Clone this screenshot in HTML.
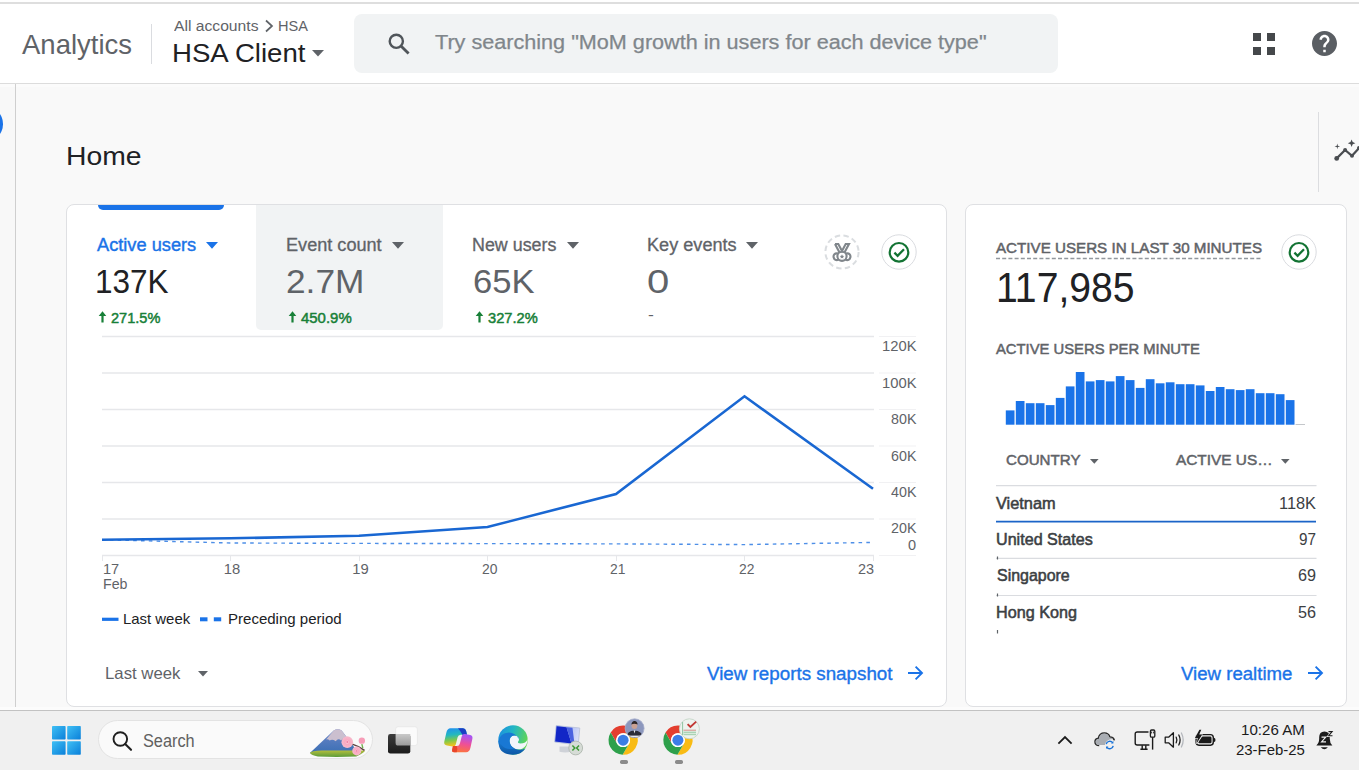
<!DOCTYPE html>
<html><head><meta charset="utf-8"><title>Analytics</title>
<style>
html,body{margin:0;padding:0;}
body{width:1359px;height:770px;overflow:hidden;position:relative;background:#f9f9f9;font-family:"Liberation Sans",sans-serif;}
.a{position:absolute;}
.t{position:absolute;white-space:pre;transform-origin:0 50%;font-family:"Liberation Sans",sans-serif;}
svg{position:absolute;overflow:visible;}

</style></head>
<body>
<!-- top browser edge -->
<div class="a" style="left:0;top:0;width:1359px;height:84px;background:#fff"></div>
<div class="a" style="left:0;top:2px;width:1359px;height:2px;background:#dedede"></div>
<div class="a" style="left:0;top:83px;width:1359px;height:1px;background:#dcdcdc"></div>
<!-- left rail -->
<div class="a" style="left:0;top:84px;width:15px;height:627px;background:#f8f8f8"></div>
<div class="a" style="left:0;top:84px;width:1359px;height:3px;background:#fbfbfb"></div>
<div class="a" style="left:15px;top:84px;width:1px;height:627px;background:#cfcfcf"></div>
<div class="a" style="left:-33px;top:106px;width:36.4px;height:36px;border-radius:50%;background:#1a73e8"></div>
<!-- header divider -->
<div class="a" style="left:151px;top:24px;width:1px;height:40px;background:#dadce0"></div>
<!-- breadcrumb chevron + dropdown -->
<svg style="left:264px;top:19px" width="10" height="14" viewBox="0 0 10 14"><path d="M2 1.5 L8 7 L2 12.5" fill="none" stroke="#5f6368" stroke-width="1.7"/></svg>
<svg style="left:312px;top:50px" width="12" height="7" viewBox="0 0 12 7"><path d="M0 0H12L6 6.5Z" fill="#5f6368"/></svg>
<!-- search box -->
<div class="a" style="left:354px;top:14px;width:704px;height:59px;border-radius:8px;background:#f1f3f4"></div>
<svg style="left:386px;top:31px" width="26" height="26" viewBox="0 0 26 26"><circle cx="10.3" cy="10.3" r="6.6" fill="none" stroke="#50555a" stroke-width="2.4"/><path d="M15.2 15.2 L22.6 22.6" stroke="#50555a" stroke-width="2.8" stroke-linecap="butt"/></svg>
<!-- apps grid -->
<svg style="left:1253px;top:33px" width="22" height="22" viewBox="0 0 22 22"><g fill="#45484b"><rect x="0" y="0" width="8" height="8"/><rect x="14" y="0" width="8" height="8"/><rect x="0" y="14" width="8" height="8"/><rect x="14" y="14" width="8" height="8"/></g></svg>
<!-- help -->
<svg style="left:1312px;top:31px" width="25" height="25" viewBox="0 0 24 24"><path fill="#5a5e63" d="M12 0C5.37 0 0 5.37 0 12s5.37 12 12 12 12-5.37 12-12S18.63 0 12 0zm1.2 20.4h-2.4V18h2.4v2.4zm2.48-9.3l-1.08 1.1c-.86.88-1.4 1.6-1.4 3.4h-2.4V15c0-1.32.54-2.52 1.4-3.4l1.49-1.5c.44-.43.71-1.03.71-1.7 0-1.32-1.08-2.4-2.4-2.4S9.6 7.08 9.6 8.4H7.2c0-2.65 2.15-4.8 4.8-4.8s4.8 2.15 4.8 4.8c0 1.06-.43 2.02-1.12 2.7z"/></svg>
<!-- right panel line + insights icon -->
<div class="a" style="left:1318px;top:112px;width:1px;height:80px;background:#dcdde0"></div>
<svg style="left:0;top:0" width="1359" height="770" viewBox="0 0 1359 770"><g fill="#4a4d51"><path d="M1336.7 158.4 L1345.1 150 L1352 155.8 L1360 147" fill="none" stroke="#4a4d51" stroke-width="2.2" stroke-linejoin="round"/><circle cx="1336.7" cy="158.4" r="2.4"/><circle cx="1345.1" cy="150" r="2"/><circle cx="1352" cy="155.8" r="2"/><circle cx="1359" cy="148" r="2"/><path d="M1351.6 139.4 l1.1 2.7 2.7 1.1 -2.7 1.1 -1.1 2.7 -1.1 -2.7 -2.7 -1.1 2.7 -1.1z"/><path d="M1337.3 143.6 l.55 2.25 2.25 .55 -2.25 .55 -.55 2.25 -.55 -2.25 -2.25 -.55 2.25 -.55z"/></g></svg>

<!-- CARD 1 -->
<div class="a" style="left:965px;top:204px;width:382px;height:503px;box-sizing:border-box;border:1px solid #dfe0e3;border-radius:8px;background:#fff"></div>
<div class="a" style="left:66px;top:204px;width:881px;height:503px;box-sizing:border-box;border:1px solid #dfe0e3;border-radius:8px;background:#fff"></div>
<div class="a" style="left:98px;top:205px;width:126px;height:5px;border-radius:0 0 5px 5px;background:#1a73e8"></div>
<div class="a" style="left:256px;top:205px;width:187px;height:124.5px;border-radius:0 0 5px 5px;background:#f1f3f4"></div>
<!-- metric dropdown triangles -->
<svg style="left:205.5px;top:242px" width="12" height="7" viewBox="0 0 12 7"><path d="M0 0H12L6 6.8Z" fill="#1a73e8"/></svg>
<svg style="left:391.5px;top:242px" width="12" height="7" viewBox="0 0 12 7"><path d="M0 0H12L6 6.8Z" fill="#5f6368"/></svg>
<svg style="left:566.5px;top:242px" width="12" height="7" viewBox="0 0 12 7"><path d="M0 0H12L6 6.8Z" fill="#5f6368"/></svg>
<svg style="left:745.5px;top:242px" width="12" height="7" viewBox="0 0 12 7"><path d="M0 0H12L6 6.8Z" fill="#5f6368"/></svg>
<!-- green up arrows -->
<svg style="left:97.6px;top:310.8px" width="9" height="12" viewBox="0 0 9 12"><path d="M4.5 0.3 L8.3 4.9 H5.6 V11.6 H3.4 V4.9 H0.7Z" fill="#188038"/></svg>
<svg style="left:287.6px;top:310.8px" width="9" height="12" viewBox="0 0 9 12"><path d="M4.5 0.3 L8.3 4.9 H5.6 V11.6 H3.4 V4.9 H0.7Z" fill="#188038"/></svg>
<svg style="left:474.6px;top:310.8px" width="9" height="12" viewBox="0 0 9 12"><path d="M4.5 0.3 L8.3 4.9 H5.6 V11.6 H3.4 V4.9 H0.7Z" fill="#188038"/></svg>
<!-- medal + check icons card1 -->
<svg style="left:824px;top:234px" width="36" height="36" viewBox="0 0 36 36"><circle cx="18" cy="18" r="16.6" fill="#fff" stroke="#dadde0" stroke-width="2" stroke-dasharray="5.4 3.4"/>
<g fill="none" stroke="#80868b" stroke-width="2.1"><path d="M11 10 H14.3 L18 17 L21.7 10 H25 L20.6 18.3"/><path d="M11 10 L15.4 18.3"/><circle cx="18" cy="22.3" r="4.6"/><path d="M14.2 19.6 C10.6 18.7 9.2 21 9.6 23.3 C10 25.6 12.3 27 14.6 25.6"/><path d="M21.8 19.6 C25.4 18.7 26.8 21 26.4 23.3 C26 25.6 23.7 27 21.4 25.6"/></g>
<path d="M18 20.2 l.7 1.5 1.6 .2 -1.2 1.1 .3 1.6 -1.4 -.8 -1.4 .8 .3 -1.6 -1.2 -1.1 1.6 -.2z" fill="#80868b"/></svg>
<svg style="left:880.5px;top:234px" width="36" height="36" viewBox="0 0 36 36"><circle cx="18" cy="18" r="17.2" fill="#fff" stroke="#dadce0" stroke-width="1"/><circle cx="18" cy="18.3" r="9.3" fill="none" stroke="#137333" stroke-width="2.2"/><path d="M13.4 18.6 L16.6 21.8 L23 15.2" fill="none" stroke="#137333" stroke-width="2.3"/></svg>

<!-- CHART -->
<svg style="left:0;top:0" width="1359" height="770" viewBox="0 0 1359 770">
<g stroke="#e6e7ea" stroke-width="1.3"><line x1="102" y1="336.5" x2="874" y2="336.5"/><line x1="102" y1="373" x2="874" y2="373"/><line x1="102" y1="409.5" x2="874" y2="409.5"/><line x1="102" y1="446" x2="874" y2="446"/><line x1="102" y1="482.5" x2="874" y2="482.5"/><line x1="102" y1="519" x2="874" y2="519"/><line x1="102" y1="555.5" x2="874" y2="555.5"/></g><g stroke="#f1f1f3" stroke-width="1.2"><line x1="879" y1="336.5" x2="916" y2="336.5"/><line x1="879" y1="373" x2="916" y2="373"/><line x1="879" y1="409.5" x2="916" y2="409.5"/><line x1="879" y1="446" x2="916" y2="446"/><line x1="879" y1="482.5" x2="916" y2="482.5"/><line x1="879" y1="519" x2="916" y2="519"/><line x1="879" y1="555.5" x2="916" y2="555.5"/></g>
<g stroke="#e6e7ea" stroke-width="1">
<line x1="102.5" y1="555" x2="102.5" y2="561"/><line x1="230.5" y1="555" x2="230.5" y2="561"/><line x1="359.5" y1="555" x2="359.5" y2="561"/><line x1="487.5" y1="555" x2="487.5" y2="561"/><line x1="616.5" y1="555" x2="616.5" y2="561"/><line x1="744.5" y1="555" x2="744.5" y2="561"/><line x1="873.5" y1="555" x2="873.5" y2="561"/>
</g>
<polyline points="102,539.7 230.5,543 359,543.4 487.5,543.6 616,543.9 744.5,544.6 873,542.4" fill="none" stroke="#2f7be3" stroke-width="1.4" stroke-dasharray="3.6 4.2" opacity="0.85"/>
<polyline points="102,539.7 230.5,538.3 359,535.8 487.5,527 616,494 744.5,396.3 873,488.8" fill="none" stroke="#1967d2" stroke-width="2.6" stroke-linejoin="miter"/>
<!-- legend -->
<line x1="102" y1="619.3" x2="118.5" y2="619.3" stroke="#1a73e8" stroke-width="3.2"/>
<line x1="200" y1="619.3" x2="207.5" y2="619.3" stroke="#1a73e8" stroke-width="4"/>
<line x1="213.8" y1="619.3" x2="221.2" y2="619.3" stroke="#1a73e8" stroke-width="4"/>
</svg>
<svg style="left:197.5px;top:671px" width="10" height="6" viewBox="0 0 10 6"><path d="M0 0H10L5 5.5Z" fill="#5f6368"/></svg>
<!-- arrows -->
<svg style="left:907px;top:665px" width="17" height="16" viewBox="0 0 17 16"><path d="M1 8 H15 M8.6 1.6 L15 8 L8.6 14.4" fill="none" stroke="#1a73e8" stroke-width="1.9"/></svg>
<svg style="left:1307px;top:665px" width="17" height="16" viewBox="0 0 17 16"><path d="M1 8 H15 M8.6 1.6 L15 8 L8.6 14.4" fill="none" stroke="#1a73e8" stroke-width="1.9"/></svg>
<!-- CARD 2 -->
<svg style="left:996px;top:257px" width="266" height="3" viewBox="0 0 266 3"><line x1="0" y1="1.5" x2="266" y2="1.5" stroke="#92979d" stroke-width="1.5" stroke-dasharray="4 2.2"/></svg>
<svg style="left:1281px;top:234px" width="36" height="36" viewBox="0 0 36 36"><circle cx="18" cy="18" r="17.2" fill="#fff" stroke="#dadce0" stroke-width="1"/><circle cx="18" cy="18.3" r="9.3" fill="none" stroke="#137333" stroke-width="2.2"/><path d="M13.4 18.6 L16.6 21.8 L23 15.2" fill="none" stroke="#137333" stroke-width="2.3"/></svg>
<svg style="left:0;top:0" width="1359" height="770" viewBox="0 0 1359 770"><g fill="#1a73e8"><rect x="1005.80" y="410.4" width="8.7" height="14.3"/><rect x="1015.80" y="401.0" width="8.7" height="23.7"/><rect x="1025.80" y="403.2" width="8.7" height="21.5"/><rect x="1035.80" y="403.2" width="8.7" height="21.5"/><rect x="1045.80" y="405.1" width="8.7" height="19.6"/><rect x="1055.80" y="397.9" width="8.7" height="26.8"/><rect x="1065.80" y="386.4" width="8.7" height="38.3"/><rect x="1075.80" y="372.0" width="8.7" height="52.7"/><rect x="1085.80" y="381.4" width="8.7" height="43.3"/><rect x="1095.80" y="380.1" width="8.7" height="44.6"/><rect x="1105.80" y="381.4" width="8.7" height="43.3"/><rect x="1115.80" y="376.1" width="8.7" height="48.6"/><rect x="1125.80" y="380.1" width="8.7" height="44.6"/><rect x="1135.80" y="387.9" width="8.7" height="36.8"/><rect x="1145.80" y="379.2" width="8.7" height="45.5"/><rect x="1155.80" y="383.3" width="8.7" height="41.4"/><rect x="1165.80" y="382.3" width="8.7" height="42.4"/><rect x="1175.80" y="384.2" width="8.7" height="40.5"/><rect x="1185.80" y="384.2" width="8.7" height="40.5"/><rect x="1195.80" y="385.4" width="8.7" height="39.3"/><rect x="1205.80" y="391.0" width="8.7" height="33.7"/><rect x="1215.80" y="387.0" width="8.7" height="37.7"/><rect x="1225.80" y="389.2" width="8.7" height="35.5"/><rect x="1235.80" y="390.1" width="8.7" height="34.6"/><rect x="1245.80" y="389.2" width="8.7" height="35.5"/><rect x="1255.80" y="393.2" width="8.7" height="31.5"/><rect x="1265.80" y="393.2" width="8.7" height="31.5"/><rect x="1275.80" y="394.2" width="8.7" height="30.5"/><rect x="1285.80" y="400.1" width="8.7" height="24.6"/></g><line x1="1295.5" y1="424.5" x2="1305" y2="424.5" stroke="#c4c7cb" stroke-width="1"/><g stroke="#dadce0" stroke-width="1.2"><line x1="996" y1="485.7" x2="1316.5" y2="485.7"/><line x1="996" y1="558.4" x2="1316.5" y2="558.4"/><line x1="996" y1="595.5" x2="1316.5" y2="595.5"/></g><line x1="996" y1="521.7" x2="1316" y2="521.7" stroke="#1b64c8" stroke-width="1.8"/><g stroke="#5f6368" stroke-width="1.2"><line x1="997.5" y1="556.5" x2="997.5" y2="559.5"/><line x1="997.5" y1="593.5" x2="997.5" y2="596.5"/><line x1="997.5" y1="630" x2="997.5" y2="633.5"/></g></svg>
<svg style="left:1090px;top:458.7px" width="8.6" height="5.2" viewBox="0 0 10 6"><path d="M0 0H10L5 5.5Z" fill="#5f6368"/></svg>
<svg style="left:1281px;top:458.7px" width="8.6" height="5.2" viewBox="0 0 10 6"><path d="M0 0H10L5 5.5Z" fill="#5f6368"/></svg>
<!-- TASKBAR -->
<div class="a" style="left:0;top:707px;width:1359px;height:3px;background:#fcfcfc"></div>
<div class="a" style="left:0;top:710px;width:1359px;height:60px;background:#f0f0f0"></div>
<div class="a" style="left:0;top:710px;width:1359px;height:1px;background:#c2c2c2"></div>
<!-- windows logo -->
<svg style="left:52px;top:726px" width="29" height="29" viewBox="0 0 29 29"><defs><linearGradient id="wg" x1="0" y1="0" x2="1" y2="1"><stop offset="0" stop-color="#3fc0f5"/><stop offset="1" stop-color="#0a7fd9"/></linearGradient></defs><g fill="url(#wg)"><rect x="0" y="0" width="13.6" height="13.6" rx="0.8"/><rect x="15.2" y="0" width="13.6" height="13.6" rx="0.8"/><rect x="0" y="15.2" width="13.6" height="13.6" rx="0.8"/><rect x="15.2" y="15.2" width="13.6" height="13.6" rx="0.8"/></g></svg>
<!-- search pill -->
<div class="a" style="left:98px;top:720.2px;width:274.6px;height:39.2px;border-radius:19.6px;background:#fafafa;border:1px solid #e3e3e3;box-sizing:border-box"></div>
<svg style="left:110px;top:729px" width="24" height="24" viewBox="0 0 24 24"><circle cx="10.3" cy="10" r="6.8" fill="none" stroke="#1f1f1f" stroke-width="1.9"/><path d="M15.2 15 L21 20.8" stroke="#1f1f1f" stroke-width="2.1" stroke-linecap="round"/></svg>
<!-- mountain / blossoms -->
<svg style="left:290px;top:715px" width="90" height="50" viewBox="0 0 1359 755"><defs>
<linearGradient id="mt" x1="0" y1="0" x2="0" y2="1"><stop offset="0" stop-color="#6d86c8"/><stop offset="1" stop-color="#3b6fb4"/></linearGradient>
<linearGradient id="gr" x1="0" y1="0" x2="0" y2="1"><stop offset="0" stop-color="#b4bf3c"/><stop offset="1" stop-color="#5c9c3a"/></linearGradient>
<radialGradient id="bl"><stop offset="0" stop-color="#fff1f5"/><stop offset=".35" stop-color="#f9a8c0"/><stop offset="1" stop-color="#f7b9cc"/></radialGradient></defs>
<path d="M300 575 L660 235 Q720 195 780 235 L1010 540 L1000 575Z" fill="url(#mt)"/>
<path d="M545 370 L660 235 Q720 195 780 235 L850 330 Q800 350 770 385 Q730 340 690 395 Q640 360 600 385 Q570 360 545 370Z" fill="#cbbfcf"/>
<path d="M300 575 Q320 540 480 535 L1130 535 Q1140 560 1000 625 Q700 640 420 625 Q320 610 300 575Z" fill="url(#gr)"/>
<path d="M940 440 Q1040 470 1125 535" fill="none" stroke="#5d3f3f" stroke-width="22"/>
<path d="M1085 440 L1100 500" fill="none" stroke="#6fae4a" stroke-width="20"/>
<circle cx="865" cy="410" r="88" fill="url(#bl)"/><circle cx="865" cy="408" r="16" fill="#ef7fa3"/>
<circle cx="1085" cy="388" r="48" fill="#f79db8"/>
<circle cx="1008" cy="542" r="68" fill="url(#bl)"/><circle cx="1008" cy="542" r="13" fill="#ef7fa3"/>
</svg>
<!-- task view -->
<svg style="left:387px;top:726px" width="32" height="29" viewBox="0 0 32 29"><defs><linearGradient id="tv1" x1="0" y1="0" x2="0" y2="1"><stop offset="0" stop-color="#3c3c3c"/><stop offset="1" stop-color="#1c1c1c"/></linearGradient><linearGradient id="tv2" x1="0" y1="0" x2="0" y2="1"><stop offset="0" stop-color="#c9c9c9"/><stop offset="1" stop-color="#9b9b9b"/></linearGradient></defs>
<rect x="8.6" y="0.7" width="21.8" height="18.9" rx="2.6" fill="#fbfbfb" stroke="#e4e4e4" stroke-width=".7"/>
<rect x="1" y="8" width="22.3" height="19.6" rx="2.4" fill="url(#tv1)"/>
<path d="M8.6 8 H23.3 V19.6 H11.2 Q8.6 19.6 8.6 17Z" fill="url(#tv2)"/></svg>
<!-- copilot -->
<svg style="left:442.5px;top:725.75px" width="31.25" height="27.5" viewBox="580 110 250 220"><defs>
<linearGradient id="c1" x1="0" y1="0" x2="0.15" y2="1"><stop offset="0" stop-color="#1f8df2"/><stop offset=".4" stop-color="#22b8c0"/><stop offset=".7" stop-color="#7fc94a"/><stop offset="1" stop-color="#f6c21c"/></linearGradient>
<linearGradient id="c2" x1="0.2" y1="0" x2="0" y2="1"><stop offset="0" stop-color="#a855f2"/><stop offset=".45" stop-color="#ee4f98"/><stop offset="1" stop-color="#ff7a2e"/></linearGradient></defs>
<path d="M640 128 H740 Q760 128 765 150 L772 180 H722 Q702 180 697 200 L682 258 Q677 277 657 273 L612 266 Q585 260 590 235 L606 165 Q614 128 640 128Z" fill="url(#c1)"/>
<path d="M700 128 H740 Q760 128 765 150 L772 180 H735 Q720 150 700 128Z" fill="#1b3fc4"/>
<path d="M765 320 H668 Q650 320 653 300 L660 270 H690 Q710 270 715 250 L730 192 Q735 172 755 174 L798 182 Q820 188 815 212 L800 282 Q792 320 765 320Z" fill="url(#c2)"/>
<path d="M653 300 L660 270 H690 Q700 300 690 320 H668 Q650 320 653 300Z" fill="#e8452a"/>
</svg>
<!-- edge -->
<svg style="left:497.9px;top:724.75px" width="30" height="30" viewBox="0 0 30 30"><defs>
<linearGradient id="e2" x1="0" y1="0.2" x2="1" y2="0.5"><stop offset="0" stop-color="#1c8fe0"/><stop offset=".45" stop-color="#22b6c4"/><stop offset="1" stop-color="#62d651"/></linearGradient>
<linearGradient id="e3" x1="0" y1="0" x2="0" y2="1"><stop offset="0" stop-color="#1b84db"/><stop offset="1" stop-color="#0d56a6"/></linearGradient></defs>
<circle cx="15" cy="15" r="14.7" fill="url(#e2)"/>
<path d="M0.5 16.5 Q0.5 29.7 15 29.7 Q23 29.7 27.5 23.5 Q21.5 26 16.8 23.6 Q11 20.6 11.6 15 Q5 9 0.5 16.5Z" fill="url(#e3)"/>
<path d="M11.6 15.2 Q12 11 16 10.4 Q20.6 10.4 21 14 Q21 15.8 19.9 17 Q19.5 18.3 22.2 18.6 Q28.2 18.6 29.6 14 Q29.7 20.5 24.2 23.8 Q19 25.4 15 22.4 Q11.4 19.8 11.6 15.2Z" fill="#f2f6fb"/>
<path d="M0.5 16.5 Q1.8 7.8 11 7.4 Q17.2 7.4 21 14 Q20.6 10.4 16 10.4 Q12 11 11.6 15.2 Q11 20.6 16.8 23.6 Q8 25.6 3 19.8 Q0.8 18.4 0.5 16.5Z" fill="#1978d4"/>
</svg>
<!-- remote desktop -->
<svg style="left:0;top:0" width="1359" height="770" viewBox="0 0 1359 770"><defs><linearGradient id="rd1" x1="0" y1="0" x2="1" y2="0.3"><stop offset="0" stop-color="#7f96ee"/><stop offset="1" stop-color="#d6dcf7"/></linearGradient></defs>
<path d="M559.5 746.5 H571 V751.8 Q565 753.2 559.5 751.8Z" fill="#cfd2d8"/>
<path d="M556.2 725.6 L579.8 728 L578.2 745 L554.6 742Z" fill="url(#rd1)" stroke="#b8c0d8" stroke-width=".8"/>
<path d="M556.6 726.2 L566.5 727.2 L571.5 743.6 L555.2 741.6Z" fill="#1226c6"/>
<path d="M566.5 727.2 L572.5 727.8 L574.5 744 L571.5 743.6Z" fill="#4a62e0"/>
<circle cx="575.7" cy="748" r="6.9" fill="#d6dcd6" stroke="#aab2aa" stroke-width=".8"/>
<path d="M572.4 745.4 l2.4 2.6 -2.4 2.6 M579 745.4 l-2.4 2.6 2.4 2.6" fill="none" stroke="#3d9a35" stroke-width="1.5"/>
</svg>
<!-- chrome icons -->
<svg style="left:0;top:0" width="1359" height="770" viewBox="0 0 1359 770"><circle cx="623.1" cy="740.2" r="14.299999999999999" fill="#fff"/><path d="M623.10 733.30 L635.97 733.30 A14.6 14.6 0 0 0 610.69 732.51 L617.12 743.65 A6.9 6.9 0 0 1 623.10 733.30Z" fill="#e33e2f"/><path d="M623.10 733.30 L635.97 733.30 A14.6 14.6 0 0 1 622.64 754.79 L629.08 743.65 A6.9 6.9 0 0 0 623.10 733.30Z" fill="#f8bb14"/><path d="M617.12 743.65 L610.69 732.51 A14.6 14.6 0 0 0 622.64 754.79 L629.08 743.65 A6.9 6.9 0 0 1 617.12 743.65Z" fill="#2ea04b"/><circle cx="623.1" cy="740.2" r="6.9" fill="#fff"/><circle cx="623.1" cy="740.2" r="5.5" fill="#3c7de6"/><circle cx="677.9" cy="740.2" r="14.299999999999999" fill="#fff"/><path d="M677.90 733.30 L690.77 733.30 A14.6 14.6 0 0 0 665.49 732.51 L671.92 743.65 A6.9 6.9 0 0 1 677.90 733.30Z" fill="#e33e2f"/><path d="M677.90 733.30 L690.77 733.30 A14.6 14.6 0 0 1 677.44 754.79 L683.88 743.65 A6.9 6.9 0 0 0 677.90 733.30Z" fill="#f8bb14"/><path d="M671.92 743.65 L665.49 732.51 A14.6 14.6 0 0 0 677.44 754.79 L683.88 743.65 A6.9 6.9 0 0 1 671.92 743.65Z" fill="#2ea04b"/><circle cx="677.9" cy="740.2" r="6.9" fill="#fff"/><circle cx="677.9" cy="740.2" r="5.5" fill="#3c7de6"/><g><circle cx="634.6" cy="728.3" r="9.5" fill="#8c97bd"/><clipPath id="av"><circle cx="634.6" cy="728.3" r="9.3"/></clipPath><g clip-path="url(#av)"><path d="M626 738 Q627 730.5 634.3 730.5 Q641.8 730.5 643.5 738Z" fill="#2b2c38"/><ellipse cx="634.4" cy="725.6" rx="2.9" ry="3.5" fill="#c9a193"/><path d="M631.3 724.5 Q632 720.8 634.6 721 Q637.4 721 637.6 724.6 Q634.5 722.8 631.3 724.5Z" fill="#2d2626"/><path d="M633.6 730.3 L634.5 733.5 L635.4 730.3Z" fill="#e8e8ee"/><rect x="628" y="735.6" width="13" height="1.8" fill="#e9e9ef"/></g><circle cx="634.6" cy="728.3" r="9.5" fill="none" stroke="#a7afcc" stroke-width=".8"/></g><g><circle cx="689.4" cy="728.8" r="10" fill="#eef3ee"/><circle cx="689.4" cy="728.8" r="10" fill="none" stroke="#c5d6c8" stroke-width=".9"/><path d="M682.6 722 V735" stroke="#8fc4a0" stroke-width="1"/><rect x="683.5" y="729.6" width="12.5" height="1.3" fill="#d9a6a0"/><rect x="683.5" y="731.6" width="12.5" height="3.6" fill="#a9d3b4"/><rect x="683.5" y="733" width="12.5" height=".8" fill="#e4f1e7"/><path d="M687.6 724.2 L690.4 727 L696.2 721.6" fill="none" stroke="#c23a34" stroke-width="1.9"/></g></svg>
<div class="a" style="left:619.5px;top:760.3px;width:8px;height:3.4px;border-radius:1.7px;background:#8b8b8b"></div>
<div class="a" style="left:674.5px;top:760.3px;width:8px;height:3.4px;border-radius:1.7px;background:#8b8b8b"></div>
<!-- system tray -->
<svg style="left:1057px;top:735px" width="16" height="10" viewBox="0 0 16 10"><path d="M1.4 8.6 L8 2 L14.6 8.6" fill="none" stroke="#1b1b1b" stroke-width="1.8"/></svg>
<svg style="left:1094px;top:731px" width="22" height="20" viewBox="0 0 22 20"><path d="M5.2 14.5 Q1 14.5 1 10.8 Q1 7.6 4.4 7.2 Q5.4 2 10.4 2 Q14.6 2 15.9 6 Q19.6 6.2 20.4 9.4" fill="none" stroke="#2a2a2a" stroke-width="1.5"/><path d="M5 14 Q1.6 14 1.6 10.9 Q1.6 8 4.8 7.8 Q5.6 2.6 10.4 2.6 Q14.2 2.6 15.4 6.6 Q18 6.6 19 8 Q15 8 13 10 Q11 12 11 14Z" fill="#a9adb3"/><circle cx="15.7" cy="14" r="4.3" fill="#f0f0f0"/><path d="M12.2 13.2 A3.6 3.6 0 0 1 18.6 11.6 M19.2 14.8 A3.6 3.6 0 0 1 12.8 16.4" fill="none" stroke="#1a73d8" stroke-width="1.4"/><path d="M19.4 10 V12.4 H17 Z M12 18 V15.6 H14.4Z" fill="#1a73d8"/></svg>
<svg style="left:1134px;top:729px" width="23" height="22" viewBox="0 0 23 22"><path d="M14.5 3 H3.2 Q1.2 3 1.2 5 V14 Q1.2 16 3.2 16 H15.4" fill="none" stroke="#1b1b1b" stroke-width="1.4"/><path d="M6.4 20.3 H13.6 M8.2 16.2 V20 M11.8 16.2 V20" fill="none" stroke="#1b1b1b" stroke-width="1.4"/><rect x="16.4" y="1" width="4.4" height="7.2" rx="1.2" fill="#f0f0f0" stroke="#1b1b1b" stroke-width="1.3"/><path d="M18.6 8.2 V20.6" stroke="#1b1b1b" stroke-width="1.4"/><path d="M17.6 2.6 V4.4 M19.6 2.6 V4.4" stroke="#1b1b1b" stroke-width=".9"/></svg>
<svg style="left:1164px;top:731px" width="22" height="18" viewBox="0 0 22 18"><path d="M1.2 6.2 H4.6 L9.4 1.8 V16.2 L4.6 11.8 H1.2Z" fill="none" stroke="#1b1b1b" stroke-width="1.3" stroke-linejoin="round"/><path d="M12.2 6.2 Q13.6 9 12.2 11.8" fill="none" stroke="#1b1b1b" stroke-width="1.3" stroke-linecap="round"/><path d="M14.8 4 Q17.4 9 14.8 14" fill="none" stroke="#1b1b1b" stroke-width="1.3" stroke-linecap="round"/><path d="M17.4 2 Q21 9 17.4 16" fill="none" stroke="#b5b8bd" stroke-width="1.3" stroke-linecap="round"/></svg>


<svg style="left:1185px;top:720px" width="160" height="40" viewBox="0 0 1359 340"><g fill="#1b1b1b">
<rect x="94" y="124" width="146" height="90" rx="24" fill="none" stroke="#1b1b1b" stroke-width="12"/>
<path d="M246 150 Q259 154 259 169 Q259 184 246 188Z"/>
<path d="M152 141 H214 Q225 141 225 152 V186 Q225 197 214 197 H120 Q110 197 114 188 L140 148 Q144 141 152 141Z"/>
<path d="M122 82 L84 154 H108 L98 200 L146 124 H120 L138 82Z" stroke="#f0f0f0" stroke-width="8" paint-order="stroke"/>
<path d="M1116 216 Q1140 196 1140 160 V146 Q1140 100 1185 97 Q1230 100 1230 146 V160 Q1230 196 1252 216Z"/>
<path d="M1153 232 H1214 Q1184 264 1153 232Z"/>
<path d="M1160 146 H1196 L1160 186 H1198" fill="none" stroke="#f0f0f0" stroke-width="9.5"/>
<path d="M1219 99 H1250 L1221 134 H1253" fill="none" stroke="#f0f0f0" stroke-width="19"/>
<path d="M1219 99 H1250 L1221 134 H1253" fill="none" stroke="#1b1b1b" stroke-width="9.5"/>
</g></svg>

<span class="t" style='left:22.00px;top:30.52px;font-size:27.5px;line-height:27.5px;color:#5f6368;'>Analytics</span>
<span class="t" style='left:173.50px;top:18.05px;font-size:15.3px;line-height:15.3px;color:#5f6368;transform:scaleX(1.0244);'>All accounts</span>
<span class="t" style='left:277.55px;top:18.05px;font-size:15.3px;line-height:15.3px;color:#5f6368;transform:scaleX(0.9516);'>HSA</span>
<span class="t" style='left:171.88px;top:40.49px;font-size:26px;line-height:26px;color:#202124;transform:scaleX(1.0613);'>HSA Client</span>
<span class="t" style='left:434.80px;top:32.07px;font-size:20px;line-height:20px;color:#80868b;-webkit-text-stroke:0.25px #80868b;transform:scaleX(1.0808);'>Try searching "MoM growth in users for each device type"</span>
<span class="t" style='left:65.66px;top:142.57px;font-size:26.5px;line-height:26.5px;color:#202124;transform:scaleX(1.0691);'>Home</span>
<span class="t" style='left:96.80px;top:237.49px;font-size:17.5px;line-height:17.5px;color:#1a73e8;-webkit-text-stroke:0.4px #1a73e8;transform:scaleX(1.0411);'>Active users</span>
<span class="t" style='left:95.35px;top:264.22px;font-size:34px;line-height:34px;color:#202124;transform:scaleX(0.9260);'>137K</span>
<span class="t" style='left:111.40px;top:309.88px;font-size:15.5px;line-height:15.5px;color:#188038;-webkit-text-stroke:0.5px #188038;transform:scaleX(0.9396);'>271.5%</span>
<span class="t" style='left:285.77px;top:237.49px;font-size:17.5px;line-height:17.5px;color:#5f6368;-webkit-text-stroke:0.3px #5f6368;transform:scaleX(1.0348);'>Event count</span>
<span class="t" style='left:285.56px;top:264.22px;font-size:34px;line-height:34px;color:#5f6368;transform:scaleX(1.0375);'>2.7M</span>
<span class="t" style='left:301.20px;top:309.88px;font-size:15.5px;line-height:15.5px;color:#188038;-webkit-text-stroke:0.5px #188038;transform:scaleX(0.9642);'>450.9%</span>
<span class="t" style='left:472.28px;top:237.49px;font-size:17.5px;line-height:17.5px;color:#5f6368;-webkit-text-stroke:0.3px #5f6368;transform:scaleX(1.0207);'>New users</span>
<span class="t" style='left:472.58px;top:264.22px;font-size:34px;line-height:34px;color:#5f6368;transform:scaleX(1.0169);'>65K</span>
<span class="t" style='left:488.20px;top:309.88px;font-size:15.5px;line-height:15.5px;color:#188038;-webkit-text-stroke:0.5px #188038;transform:scaleX(0.9453);'>327.2%</span>
<span class="t" style='left:646.96px;top:237.49px;font-size:17.5px;line-height:17.5px;color:#5f6368;-webkit-text-stroke:0.3px #5f6368;transform:scaleX(1.0353);'>Key events</span>
<span class="t" style='left:647.42px;top:264.22px;font-size:34px;line-height:34px;color:#5f6368;transform:scaleX(1.1765);'>0</span>
<span class="t" style='left:648.00px;top:308.15px;font-size:14px;line-height:14px;color:#5f6368;transform:scaleX(1.2500);'>-</span>
<span class="t" style='left:881.58px;top:339.43px;font-size:14.5px;line-height:14.5px;color:#5f6368;transform:scaleX(1.0182);'>120K</span>
<span class="t" style='left:881.58px;top:375.53px;font-size:14.5px;line-height:14.5px;color:#5f6368;transform:scaleX(1.0182);'>100K</span>
<span class="t" style='left:890.60px;top:411.63px;font-size:14.5px;line-height:14.5px;color:#5f6368;transform:scaleX(0.9846);'>80K</span>
<span class="t" style='left:890.60px;top:448.93px;font-size:14.5px;line-height:14.5px;color:#5f6368;transform:scaleX(0.9846);'>60K</span>
<span class="t" style='left:890.60px;top:484.93px;font-size:14.5px;line-height:14.5px;color:#5f6368;transform:scaleX(0.9846);'>40K</span>
<span class="t" style='left:890.60px;top:521.43px;font-size:14.5px;line-height:14.5px;color:#5f6368;transform:scaleX(0.9846);'>20K</span>
<span class="t" style='left:908.00px;top:537.73px;font-size:14.5px;line-height:14.5px;color:#5f6368;'>0</span>
<span class="t" style='left:103.41px;top:562.27px;font-size:14.8px;line-height:14.8px;color:#5f6368;transform:scaleX(0.9867);'>17</span>
<span class="t" style='left:102.52px;top:577.43px;font-size:14.5px;line-height:14.5px;color:#5f6368;transform:scaleX(0.9792);'>Feb</span>
<span class="t" style='left:223.70px;top:562.27px;font-size:14.8px;line-height:14.8px;color:#5f6368;'>18</span>
<span class="t" style='left:352.20px;top:562.27px;font-size:14.8px;line-height:14.8px;color:#5f6368;'>19</span>
<span class="t" style='left:481.70px;top:562.27px;font-size:14.8px;line-height:14.8px;color:#5f6368;transform:scaleX(0.9375);'>20</span>
<span class="t" style='left:610.20px;top:562.27px;font-size:14.8px;line-height:14.8px;color:#5f6368;transform:scaleX(0.9375);'>21</span>
<span class="t" style='left:738.70px;top:562.27px;font-size:14.8px;line-height:14.8px;color:#5f6368;transform:scaleX(0.9375);'>22</span>
<span class="t" style='left:857.60px;top:562.27px;font-size:14.8px;line-height:14.8px;color:#5f6368;transform:scaleX(0.9750);'>23</span>
<span class="t" style='left:122.99px;top:612.07px;font-size:14.8px;line-height:14.8px;color:#202124;transform:scaleX(1.0076);'>Last week</span>
<span class="t" style='left:227.98px;top:612.07px;font-size:14.8px;line-height:14.8px;color:#202124;transform:scaleX(1.0155);'>Preceding period</span>
<span class="t" style='left:105.28px;top:665.03px;font-size:16.5px;line-height:16.5px;color:#5f6368;transform:scaleX(1.0151);'>Last week</span>
<span class="t" style='left:707.30px;top:666.19px;font-size:17.5px;line-height:17.5px;color:#1a73e8;-webkit-text-stroke:0.35px #1a73e8;transform:scaleX(1.0734);'>View reports snapshot</span>
<span class="t" style='left:1181.00px;top:666.19px;font-size:17.5px;line-height:17.5px;color:#1a73e8;-webkit-text-stroke:0.35px #1a73e8;transform:scaleX(1.0638);'>View realtime</span>
<span class="t" style='left:995.80px;top:239.90px;font-size:15px;line-height:15px;color:#5f6368;-webkit-text-stroke:0.5px #5f6368;transform:scaleX(1.0110);'>ACTIVE USERS IN LAST 30 MINUTES</span>
<span class="t" style='left:995.74px;top:266.92px;font-size:42.5px;line-height:42.5px;color:#202124;transform:scaleX(0.9212);'>117,985</span>
<span class="t" style='left:995.80px;top:340.70px;font-size:15px;line-height:15px;color:#5f6368;-webkit-text-stroke:0.5px #5f6368;transform:scaleX(0.9865);'>ACTIVE USERS PER MINUTE</span>
<span class="t" style='left:1006.20px;top:452.40px;font-size:15px;line-height:15px;color:#5f6368;-webkit-text-stroke:0.5px #5f6368;transform:scaleX(1.0081);'>COUNTRY</span>
<span class="t" style='left:1176.40px;top:452.40px;font-size:15px;line-height:15px;color:#5f6368;-webkit-text-stroke:0.5px #5f6368;transform:scaleX(1.0247);'>ACTIVE US…</span>
<span class="t" style='left:996.30px;top:495.33px;font-size:16.5px;line-height:16.5px;color:#3c4043;-webkit-text-stroke:0.55px #3c4043;transform:scaleX(0.9900);'>Vietnam</span>
<span class="t" style='left:1278.81px;top:495.33px;font-size:16.5px;line-height:16.5px;color:#3c4043;transform:scaleX(0.9917);'>118K</span>
<span class="t" style='left:996.02px;top:531.03px;font-size:16.5px;line-height:16.5px;color:#3c4043;-webkit-text-stroke:0.55px #3c4043;transform:scaleX(0.9776);'>United States</span>
<span class="t" style='left:1298.80px;top:531.03px;font-size:16.5px;line-height:16.5px;color:#3c4043;transform:scaleX(0.9278);'>97</span>
<span class="t" style='left:996.50px;top:567.03px;font-size:16.5px;line-height:16.5px;color:#3c4043;-webkit-text-stroke:0.55px #3c4043;transform:scaleX(0.9667);'>Singapore</span>
<span class="t" style='left:1297.82px;top:567.03px;font-size:16.5px;line-height:16.5px;color:#3c4043;transform:scaleX(0.9824);'>69</span>
<span class="t" style='left:996.02px;top:604.43px;font-size:16.5px;line-height:16.5px;color:#3c4043;-webkit-text-stroke:0.55px #3c4043;transform:scaleX(0.9802);'>Hong Kong</span>
<span class="t" style='left:1297.82px;top:604.43px;font-size:16.5px;line-height:16.5px;color:#3c4043;transform:scaleX(0.9824);'>56</span>
<span class="t" style='left:143.47px;top:732.99px;font-size:17.5px;line-height:17.5px;color:#606060;transform:scaleX(0.9315);'>Search</span>
<span class="t" style='left:1240.89px;top:722.00px;font-size:15px;line-height:15px;color:#1b1b1b;transform:scaleX(1.0065);'>10:26 AM</span>
<span class="t" style='left:1235.80px;top:742.00px;font-size:15px;line-height:15px;color:#1b1b1b;transform:scaleX(0.9942);'>23-Feb-25</span>
</body></html>
